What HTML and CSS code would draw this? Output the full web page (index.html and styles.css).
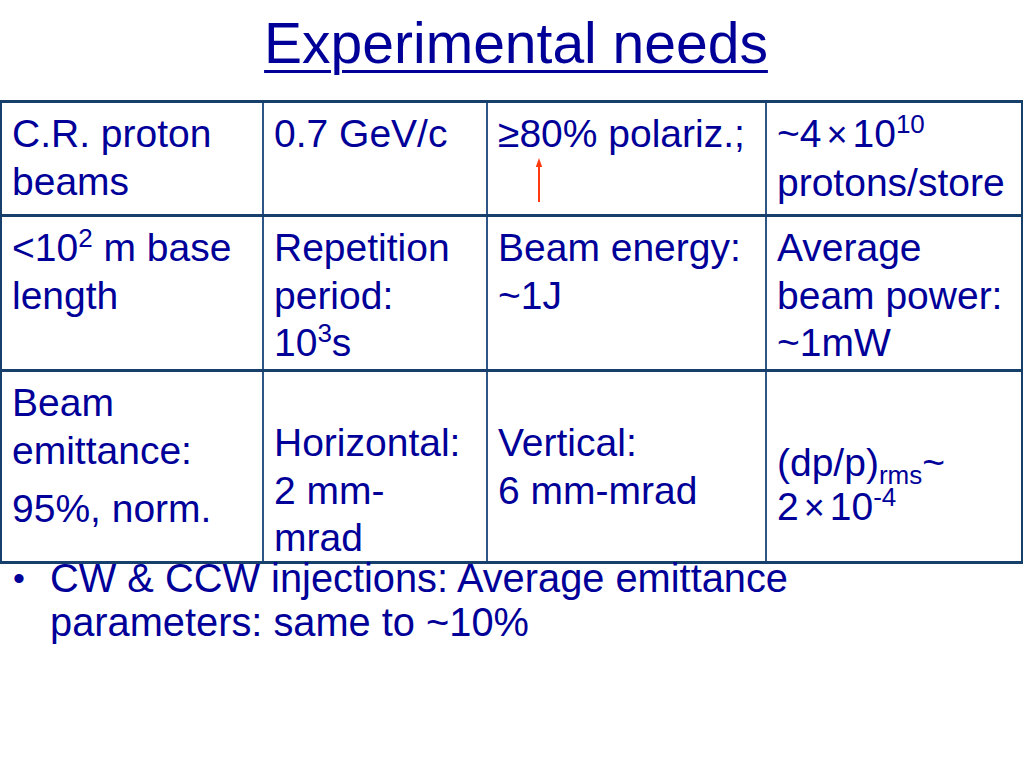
FILE: index.html
```html
<!DOCTYPE html>
<html>
<head>
<meta charset="utf-8">
<link rel="stylesheet" href="styles.css">
</head>
<body>
<h1 class="title">Experimental needs</h1>
<div class="needs">
  <div class="cell">C.R. proton beams</div>
  <div class="cell col2">0.7 GeV/c</div>
  <div class="cell col3 pol">≥80% polariz.;
    <svg class="arrow" width="10" height="46" viewBox="0 0 10 46"><path d="M5 45 V4" stroke="#ff3a10" stroke-width="2" fill="none"/><path d="M1.8 10 L5 1 L8.2 10 Z" fill="#ff3a10"/></svg>
  </div>
  <div class="cell col4">~4<span class="x">×</span>10<sup>10</sup><br>protons/store</div>

  <div class="cell">&lt;10<sup>2</sup> m base length</div>
  <div class="cell col2">Repetition period: 10<sup>3</sup>s</div>
  <div class="cell col3">Beam energy: ~1J</div>
  <div class="cell col4">Average beam power: ~1mW</div>

  <div class="cell emit"><p>Beam emittance:</p><p class="norm">95%, norm.</p></div>
  <div class="cell col2 low">Horizontal: 2 mm-mrad</div>
  <div class="cell col3 low">Vertical:<br>6 mm-mrad</div>
  <div class="cell col4 dp">(dp/p)<sub>rms</sub>~<br>2<span class="x">×</span>10<sup>-4</sup></div>
</div>
<ul class="bullets">
  <li><span class="dot">•</span><span class="btxt">CW &amp; CCW injections: Average emittance parameters: same to ~10%</span></li>
</ul>
</body>
</html>
```
FILE: styles.css
```css
html, body {
  margin: 0;
  padding: 0;
  background: #ffffff;
}
body {
  width: 1024px;
  height: 768px;
  overflow: hidden;
  font-family: "Liberation Sans", Arial, sans-serif;
  color: #000099;
}
.title {
  margin: 0;
  padding: 7px 0 0 8px;
  height: 100px;
  box-sizing: border-box;
  font-weight: normal;
  font-size: 57px;
  line-height: 72px;
  text-align: center;
  text-decoration: underline;
  text-decoration-thickness: 3px;
  text-underline-offset: 7px;
}
.needs {
  display: grid;
  grid-template-columns: 260px 224px 279px 256px;
  grid-template-rows: 111px 152px 189px;
  row-gap: 3px;
  width: 1023px;
  box-sizing: border-box;
  border-style: solid;
  border-color: #173f6c;
  border-width: 3px 2px;
  background: #173f6c;
  font-size: 39px;
  line-height: 47.5px;
}
.cell {
  background: #ffffff;
  padding: 7px 12px 0 10px;
  min-width: 0;
}
.col2, .col3, .col4 {
  border-left: 2px solid #2d5686;
}
.col2 { padding-right: 18px; }
.cell p { margin: 0; }
.emit .norm { margin-top: 11px; }
.low { padding-top: 47px; }
.dp { padding-top: 69px; line-height: 44px; }
sup {
  font-size: 26px;
  line-height: 0;
  vertical-align: 14px;
}
sub {
  font-size: 26px;
  line-height: 0;
  vertical-align: -8px;
}
.x {
  padding: 0 5px;
  font-size: 36px;
}
.pol { position: relative; }
.arrow {
  position: absolute;
  left: 46px;
  top: 54px;
}
.bullets {
  list-style: none;
  margin: -8px 0 0 0;
  padding: 0;
  font-size: 39.8px;
  line-height: 44px;
}
.bullets li {
  display: flex;
}
.dot {
  flex: 0 0 auto;
  width: 50px;
  box-sizing: border-box;
  padding-left: 13px;
  font-size: 34px;
}
.btxt {
  width: 790px;
}
```
